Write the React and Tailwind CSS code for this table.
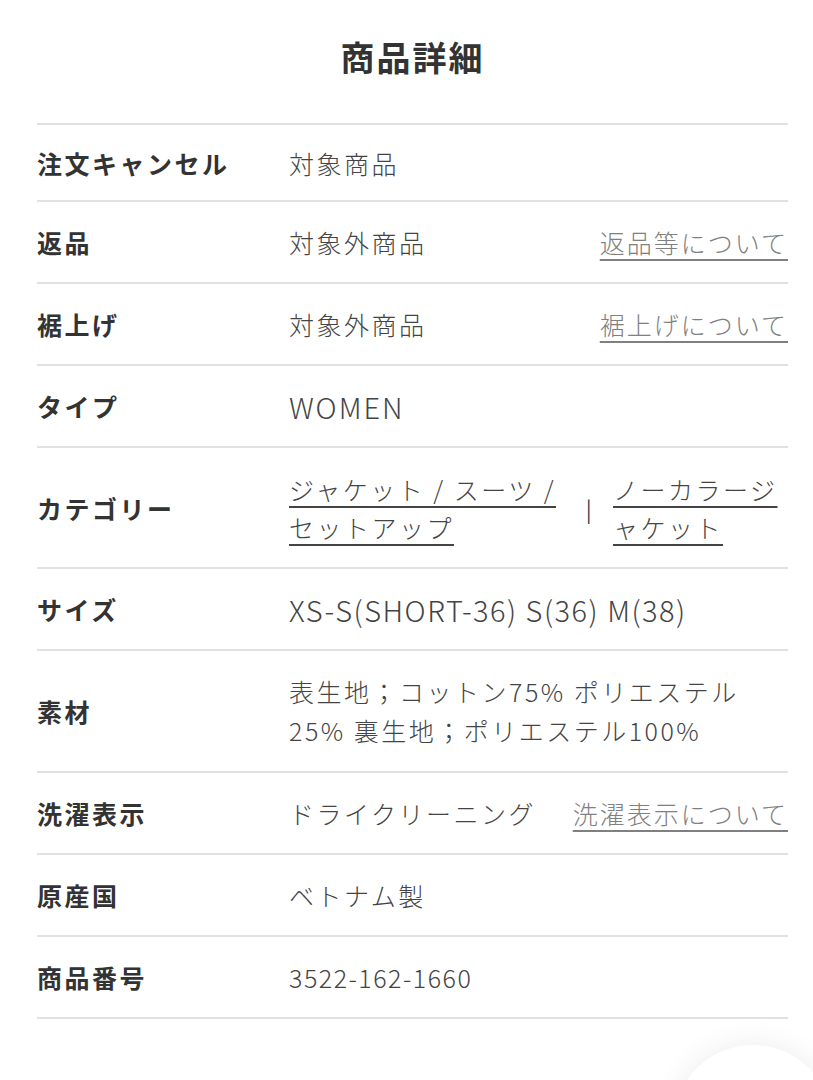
import React from 'react';

const font = { fontFamily: '"Noto Sans CJK JP", "Noto Sans", sans-serif' };

const rows = [
  { label: '注文キャンセル', value: '対象商品', first: true },
  { label: '返品', value: '対象外商品', link: '返品等について' },
  { label: '裾上げ', value: '対象外商品', link: '裾上げについて' },
  { label: 'タイプ', value: 'WOMEN', latin: 'text-[29px] tracking-[2px]' },
  { label: 'カテゴリー', category: true },
  { label: 'サイズ', value: 'XS-S(SHORT-36) S(36) M(38)', latin: 'text-[29px] tracking-[1.5px]' },
  { label: '素材', value: '表生地；コットン75% ポリエステル 25% 裏生地；ポリエステル100%', wrap: true },
  { label: '洗濯表示', value: 'ドライクリーニング', link: '洗濯表示について' },
  { label: '原産国', value: 'ベトナム製' },
  { label: '商品番号', value: '3522-162-1660', latin: 'tracking-[1.5px]' },
];

const App = () => {
  return (
    <div className="relative min-h-screen bg-white overflow-hidden" style={font}>
      <div className="ml-[37px] mr-[25px]">
        <h2 className="pt-[37px] pb-[46px] text-center text-[34px] leading-[40px] font-bold tracking-[2px] text-[#333]">
          商品詳細
        </h2>

        <div className="border-t-2 border-[#e2e1df]">
          {rows.map((row) => (
            <div
              key={row.label}
              className={`flex items-center border-b-2 border-[#e2e1df] ${row.first ? 'pt-[19px] pb-[18px]' : 'py-[21px]'}`}
            >
              <div className="w-[252px] shrink-0 text-[25px] leading-[38px] font-bold tracking-[2.5px] text-[#333]">
                {row.label}
              </div>

              {row.category ? (
                <div className="flex flex-1 items-center py-[0.5px] text-[25px] leading-[38px] tracking-[2.5px] text-[#444] font-light">
                  <a className="w-[278px] underline underline-offset-[6px] decoration-[2px]">
                    ジャケット / スーツ / セットアップ
                  </a>
                  <span className="w-[46px] text-center text-[22px] font-normal text-[#444]">|</span>
                  <a className="w-[172px] underline underline-offset-[6px] decoration-[2px]">
                    ノーカラージャケット
                  </a>
                </div>
              ) : (
                <div
                  className={`flex flex-1 items-center justify-between text-[25px] tracking-[2.5px] font-light ${
                    row.wrap ? 'leading-[39px]' : 'leading-[38px]'
                  }`}
                >
                  <span className={`text-[#444] ${row.wrap ? 'w-[470px]' : ''} ${row.latin || ''}`}>
                    {row.value}
                  </span>
                  {row.link && (
                    <a className="text-[#808080] tracking-[2px] underline underline-offset-[6px] decoration-[2px]">
                      {row.link}
                    </a>
                  )}
                </div>
              )}
            </div>
          ))}
        </div>
      </div>

      {/* floating button shadow, cut off at the bottom */}
      <div className="absolute right-[-20px] bottom-[-125px] w-[160px] h-[160px] rounded-full bg-white shadow-[0_0_30px_rgba(0,0,0,0.08)]"></div>
    </div>
  );
};

export default App;
